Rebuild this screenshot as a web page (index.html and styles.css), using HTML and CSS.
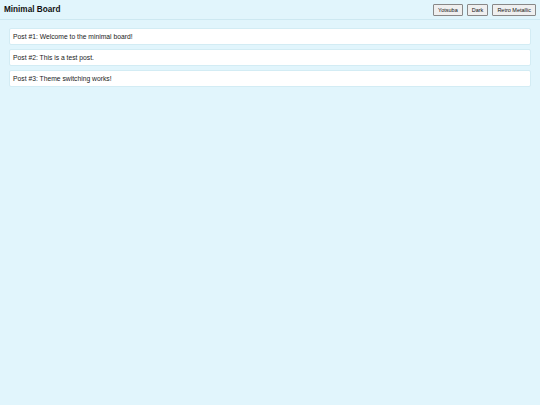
FILE: index.html
```html
<!DOCTYPE html>
<html>
<head>
<meta charset="utf-8">
<link rel="stylesheet" href="styles.css">
</head>
<body>
<header class="topbar">
  <h1 class="title">Minimal Board</h1>
  <div class="themes">
    <button class="btn">Yotsuba</button>
    <button class="btn">Dark</button>
    <button class="btn">Retro Metallic</button>
  </div>
</header>
<main class="posts">
  <div class="post">Post #1: Welcome to the minimal board!</div>
  <div class="post">Post #2: This is a test post.</div>
  <div class="post">Post #3: Theme switching works!</div>
</main>
</body>
</html>
```
FILE: styles.css
```css
html, body {
  margin: 0;
  padding: 0;
  background: #e1f5fc;
  font-family: "Liberation Sans", Arial, sans-serif;
  color: #1a1a1a;
}
.topbar {
  display: flex;
  align-items: center;
  justify-content: space-between;
  height: 19px;
  padding: 0 4px;
  border-bottom: 1px solid #cde8f1;
  background: #e1f5fc;
}
.title {
  margin: 0;
  font-size: 8.2px;
  font-weight: bold;
  color: #111;
}
.themes {
  display: flex;
  gap: 4px;
}
.btn {
  font-family: "Liberation Sans", Arial, sans-serif;
  font-size: 5.5px;
  padding: 2px 4px;
  background: #efefef;
  border: 1px solid #888;
  border-radius: 1px;
  color: #111;
  height: 12px;
}
.posts {
  display: flex;
  flex-direction: column;
  gap: 4px;
  padding: 8px 9px;
}
.post {
  background: #fff;
  border: 1px solid #d3ecf4;
  border-radius: 2px;
  padding: 0 3px;
  height: 15px;
  line-height: 15px;
  font-size: 6.75px;
}
```
